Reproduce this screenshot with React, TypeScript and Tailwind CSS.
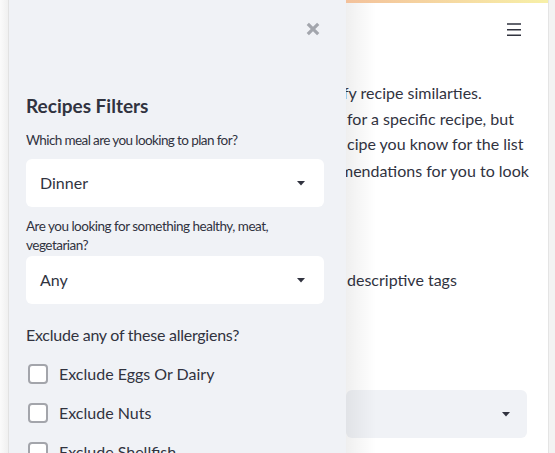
import React from "react";

const Caret = () => (
  <svg width="10" height="6" viewBox="0 0 10 6" className="shrink-0">
    <path d="M1 1 L9 1 L5 5.5 Z" fill="#31333f" />
  </svg>
);

function Select({ value }: { value: string }) {
  return (
    <div className="h-[48px] w-[298px] bg-white rounded-[6px] flex items-center justify-between pl-[14px] pr-[18px]">
      <span className="text-[16px] text-[#31333f]">{value}</span>
      <Caret />
    </div>
  );
}

function Check({ label }: { label: string }) {
  return (
    <div className="flex items-center h-[20px] gap-[11px] pl-[2px] shrink-0">
      <div className="w-[20px] h-[20px] rounded-[4px] border-2 border-[#a3a5ab] bg-white shrink-0" />
      <span className="text-[16px] text-[#31333f]">{label}</span>
    </div>
  );
}

export default function App() {
  return (
    <div
      className="w-[555px] h-[453px] overflow-hidden bg-[#f4f4f4] flex"
      style={{ fontFamily: "Lato, 'Noto Sans', sans-serif" }}
    >
      <div className="w-[9px] h-full bg-gradient-to-r from-[#fbfbfb] to-[#f0f0f0] border-r border-[#e2e2e2] shrink-0" />
      <div className="relative w-[540px] h-full bg-white border-r border-[#e4e4e4] shrink-0 overflow-hidden">
        {/* main */}
        <div className="flex flex-col pl-[337px] h-full">
          <div className="h-[3px] w-full bg-gradient-to-r from-[#f3c19b] to-[#f7f0a8] shrink-0" />
          <div className="flex justify-end pr-[26px] pt-[20px] h-[66px] shrink-0">
            <svg width="16" height="14" viewBox="0 0 16 14">
              <path d="M1 1 H15 M1 6.7 H15 M1 12.3 H15" stroke="#31333f" strokeWidth="1.6" />
            </svg>
          </div>
          <div className="text-[16px] leading-[25.5px] text-[#31333f] whitespace-nowrap flex flex-col pt-[11px] shrink-0">
            <div className="-ml-[3px]">fy recipe similarties.</div>
            <div className="ml-[1px]">for a specific recipe, but</div>
            <div className="ml-[1px]">cipe you know for the list</div>
            <div className="-ml-[6px] mt-[1px]">mendations for you to look</div>
            <div className="h-[84px]" />
            <div className="ml-[1px]">descriptive tags</div>
          </div>
          <div className="mt-[97px] mr-[21px] h-[48px] bg-[#f0f2f6] rounded-[6px] flex items-center justify-end pr-[16px] shrink-0">
            <Caret />
          </div>
        </div>
        {/* sidebar shadow */}
        <div className="absolute left-[337px] top-[3px] w-[30px] h-full bg-gradient-to-r from-[#00000010] to-transparent" />
        {/* sidebar */}
        <div className="absolute left-0 top-0 w-[337px] h-full bg-[#f0f2f6] flex flex-col pl-[17px] pr-[14px]">
          <div className="flex justify-end pr-[12px] pt-[22px] h-[60px] shrink-0">
            <svg width="14" height="14" viewBox="0 0 14 14">
              <path d="M1.8 1.8 L12.2 12.2 M12.2 1.8 L1.8 12.2" stroke="#a3a6ad" strokeWidth="3.2" />
            </svg>
          </div>
          <div className="mt-[33px] text-[19px] font-bold text-[#31333f] leading-[26px] shrink-0">Recipes Filters</div>
          <div className="mt-[12px] text-[13.5px] tracking-[-0.6px] text-[#31333f] leading-[19px] shrink-0">Which meal are you looking to plan for?</div>
          <div className="mt-[9px] shrink-0"><Select value="Dinner" /></div>
          <div className="mt-[10px] text-[13.5px] tracking-[-0.5px] text-[#31333f] leading-[19px] w-[265px] shrink-0">Are you looking for something healthy, meat, vegetarian?</div>
          <div className="mt-[1px] shrink-0"><Select value="Any" /></div>
          <div className="mt-[20px] text-[16px] tracking-[-0.25px] text-[#31333f] leading-[22px] shrink-0">Exclude any of these allergiens?</div>
          <div className="mt-[18px] flex flex-col gap-[19px] shrink-0">
            <Check label="Exclude Eggs Or Dairy" />
            <Check label="Exclude Nuts" />
            <Check label="Exclude Shellfish" />
          </div>
        </div>
      </div>
      <div className="w-[6px] h-full bg-[#f3f3f3] shrink-0" />
    </div>
  );
}
